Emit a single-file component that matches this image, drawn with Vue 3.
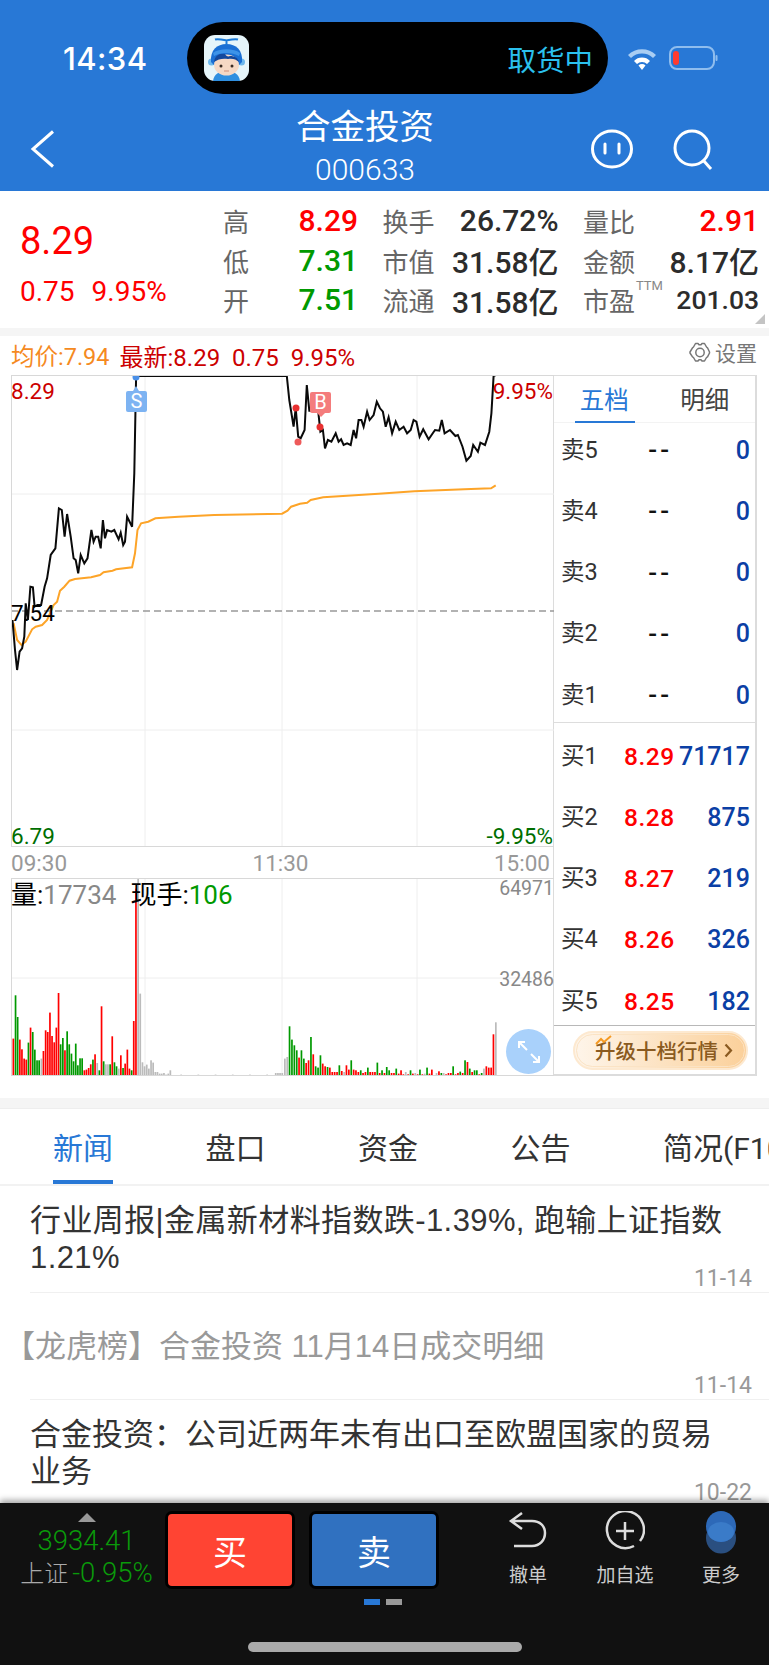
<template>
  <div class="page">
    <!-- header -->
    <header class="topbar">
      <div class="status-row">
        <span class="clock">14:34</span>
        <div class="island">
          <svg class="app-icon" width="45" height="46" viewBox="0 0 45 46">
            <rect width="45" height="46" rx="11" fill="#e6f5fa" />
            <path d="M9 46c1-7 6-10 13.500-10S35 39 36 46z" fill="#2f8fe0" />
            <circle cx="7.500" cy="27" r="3.500" fill="#6db8ee" />
            <circle cx="37.500" cy="27" r="3.500" fill="#6db8ee" />
            <path d="M7 27C6 15 13 9 22.500 9S39 15 38 27l-3 3H10z" fill="#1a6fd4" />
            <ellipse cx="22.500" cy="30" rx="12.500" ry="10.500" fill="#f6d8c4" />
            <path d="M10 27c1-7 6-9 11-8 1 2 3 3 5 2 5 0 8 2 9 6-3-3-7-4-11-3-5-1-10 0-14 3z" fill="#14489c" />
            <path d="M9 18c6-5 21-5 27 0l-1 3c-7-4-18-4-25 0z" fill="#3d93e8" />
            <circle cx="17" cy="31" r="1.500" fill="#3a2a22" />
            <circle cx="28" cy="31" r="1.500" fill="#3a2a22" />
            <path d="M20 36h5" stroke="#d89a84" stroke-width="1.200" />
            <path d="M11 4.500c3-1 7 0 11.500 1 4.500-1 8.500-2 11.500-1M22.500 5v5" fill="none" stroke="#1b7ad8" stroke-width="2" />
          </svg>
          <span class="pickup">取货中</span>
        </div>
        <div class="status-icons">
          <svg width="30" height="24" viewBox="0 0 30 24">
            <path d="M1 9a20 20 0 0 1 28 0l-3 3a16 16 0 0 0-22 0z" fill="#a9cdf3" />
            <path d="M7 15a11 11 0 0 1 16 0l-3 3a7 7 0 0 0-10 0z" fill="#fff" />
            <path d="M11.500 19.500a5 5 0 0 1 7 0L15 24z" fill="#fff" />
          </svg>
          <svg width="49" height="24" viewBox="0 0 49 24">
            <rect x="1" y="1" width="44" height="22" rx="7" fill="none" stroke="#8fbdee" stroke-width="2" />
            <rect x="4" y="5" width="6" height="14" rx="3" fill="#ff3b30" />
            <rect x="46.500" y="9" width="2" height="6" rx="1" fill="#8fbdee" />
          </svg>
        </div>
      </div>
      <div class="nav-row">
        <div class="nav-left">
          <svg width="25" height="38" viewBox="0 0 25 38">
            <path d="M23 1.500 3 19l20 17.500" fill="none" stroke="#fff" stroke-width="3" />
          </svg>
        </div>
        <div class="nav-title">
          <div class="stock-name">合金投资</div>
          <div class="stock-code">000633</div>
        </div>
        <div class="nav-right">
          <svg width="42" height="40" viewBox="0 0 42 40">
            <ellipse cx="21" cy="20" rx="19.500" ry="18" fill="none" stroke="#fff" stroke-width="3" />
            <path d="M14 15v9M28 15v9" stroke="#fff" stroke-width="3" stroke-linecap="round" />
          </svg>
          <svg width="42" height="42" viewBox="0 0 42 42">
            <circle cx="19" cy="19" r="17" fill="none" stroke="#fff" stroke-width="3" />
            <path d="m30 31 8 9" stroke="#fff" stroke-width="3" />
          </svg>
        </div>
      </div>
    </header>

    <!-- quote summary -->
    <section class="quote">
      <div class="quote-main">
        <div class="last-price">8.29</div>
        <div class="last-change"><span>0.75</span><span>9.95%</span></div>
      </div>
      <div class="quote-grid">
        <div v-for="cell in quoteCells" :key="cell.label" class="quote-cell">
          <span class="quote-label">{{ cell.label }}<sup v-if="cell.sup" class="ttm">TTM</sup></span>
          <span class="quote-value" :class="[cell.tone, { small: cell.sup }]">{{ cell.value }}</span>
        </div>
      </div>
      <i class="corner"></i>
    </section>
    <div class="strip"></div>

    <!-- legend -->
    <div class="legend">
      <span class="avg">均价:7.94</span>
      <span class="latest">最新:8.29&nbsp;&nbsp;0.75&nbsp;&nbsp;9.95%</span>
      <span class="settings">
        <svg width="22" height="21" viewBox="0 0 22 21">
          <path d="M6.500 1.500h2.500l1 1.200h2l1-1.200h2.500l2 3.500 1 .800 2 4.200v1l-2 3.800-1 .700-2 3.500H13l-1-1.200h-2l-1 1.200H6.500l-2-3.500-1-.700-2.500-3.800v-1l2.500-4.200 1-.800z" fill="none" stroke="#777" stroke-width="1.500" stroke-linejoin="round" />
          <circle cx="11" cy="10.500" r="4.200" fill="none" stroke="#777" stroke-width="1.500" />
        </svg>
        设置
      </span>
    </div>

    <!-- chart + order book -->
    <section class="market">
      <div class="charts">
        <div class="price-chart">
          <svg class="chart-svg" width="543" height="472" viewBox="0 0 543 472">
            <path d="M0 119H543M0 355H543" stroke="#eee" stroke-width="1" />
            <path d="M134 0V472M271 0V472M406 0V472" stroke="#eee" stroke-width="1" />
            <path d="M0 236H543" stroke="#999" stroke-width="1.500" stroke-dasharray="7 4" />
            <polyline :points="avgPoints" fill="none" stroke="#fda428" stroke-width="2" />
            <polyline :points="pricePoints" fill="none" stroke="#0a0a0a" stroke-width="2" />
            <circle cx="125" cy="2" r="3.500" fill="#4a90e8" />
            <path d="M125 11l3 5h-6z" fill="#7db3f2" />
            <rect x="115" y="16" width="21" height="21" rx="2" fill="#7db3f2" />
            <text x="125.500" y="33" class="mark-text">S</text>
            <path d="M306 38h8l-4 4z" fill="#f47c7c" />
            <rect x="299" y="17" width="21" height="21" rx="2" fill="#f47c7c" />
            <text x="309.500" y="34" class="mark-text">B</text>
            <circle cx="285" cy="33" r="3.500" fill="#e83030" />
            <circle cx="287" cy="67" r="3.500" fill="#ee5a5a" />
            <circle cx="309" cy="52" r="3.500" fill="#e83030" />
          </svg>
          <span class="axis-tag tl red">8.29</span>
          <span class="axis-tag tr red">9.95%</span>
          <span class="axis-tag ml">7.54</span>
          <span class="axis-tag bl green">6.79</span>
          <span class="axis-tag br green">-9.95%</span>
        </div>
        <div class="time-axis">
          <span>09:30</span><span>11:30</span><span>15:00</span>
        </div>
        <div class="volume-chart">
          <svg class="chart-svg" width="543" height="198" viewBox="0 0 543 198">
            <path d="M0 100H543" stroke="#eee" stroke-width="1" />
            <path d="M134 0V198M271 0V198M406 0V198" stroke="#eee" stroke-width="1" />
            <rect v-for="bar in bars" :key="bar.x" :x="bar.x" :y="bar.y" width="1.700" :height="bar.h" :fill="bar.fill" />
          </svg>
          <div class="vol-text">
            <b>量:</b><span class="vol-gray">17734</span>
            <b class="vol-now">现手:</b><span class="vol-green">106</span>
          </div>
          <span class="vol-max">64971</span>
          <span class="vol-mid">32486</span>
          <span class="expand">
            <svg width="26" height="26" viewBox="0 0 26 26">
              <path d="M3 9V3h6M3 3l8 8M23 17v6h-6M23 23l-8-8" fill="none" stroke="#fff" stroke-width="2" />
            </svg>
          </span>
        </div>
      </div>

      <aside class="book">
        <div class="book-tabs">
          <span class="book-tab active">五档</span>
          <span class="book-tab">明细</span>
        </div>
        <div class="book-list sells">
          <div v-for="row in sells" :key="row.label" class="book-row">
            <span class="book-label">{{ row.label }}</span>
            <span class="book-price dash">--</span>
            <span class="book-vol">0</span>
          </div>
        </div>
        <div class="book-list buys">
          <div v-for="row in buys" :key="row.label" class="book-row">
            <span class="book-label">{{ row.label }}</span>
            <span class="book-price">{{ row.price }}</span>
            <span class="book-vol">{{ row.vol }}</span>
          </div>
        </div>
        <div class="upgrade-wrap">
          <div class="upgrade">
            <span class="upgrade-text">
              <svg class="spark" width="18" height="10" viewBox="0 0 18 10">
                <path d="M1 9l5-5 3 3 7-6" fill="none" stroke="#f59a23" stroke-width="2" />
              </svg>
              升级十档行情
            </span>
            <svg width="9" height="15" viewBox="0 0 9 15">
              <path d="M1.500 1.500 7 7.500l-5.500 6" fill="none" stroke="#8a5a20" stroke-width="2.200" />
            </svg>
          </div>
        </div>
      </aside>
    </section>

    <div class="strip lower"></div>

    <!-- news tabs -->
    <nav class="tabs">
      <span v-for="(t, i) in tabs" :key="t" class="tab" :class="{ on: i === 0 }">{{ t }}</span>
    </nav>
    <section class="news">
      <article v-for="n in news" :key="n.title" class="news-item">
        <div class="news-title" :class="n.cls">{{ n.title }}</div>
        <span class="news-date">{{ n.date }}</span>
      </article>
    </section>

    <!-- bottom bar -->
    <footer class="bottom">
      <div class="bar-main">
        <div class="index">
          <i class="index-arrow"></i>
          <div class="index-value">3934.41</div>
          <div class="index-line"><span class="index-name">上证</span><span class="index-pct">-0.95%</span></div>
        </div>
        <button class="trade buy">买</button>
        <button class="trade sell">卖</button>
        <div class="actions">
          <div class="action">
            <svg width="40" height="38" viewBox="0 0 40 38">
              <path d="M14 2 3 10l11 8M3 10h21c8 0 13 5 13 12s-5 13-13 13H6" fill="none" stroke="#ddd" stroke-width="2.500" />
            </svg>
            <span>撤单</span>
          </div>
          <div class="action">
            <svg width="40" height="40" viewBox="0 0 40 40">
              <path d="M29 35A18.500 18.500 0 1 1 35 30" fill="none" stroke="#ddd" stroke-width="2.500" />
              <path d="M20 11v18M11 20h18" stroke="#ddd" stroke-width="2.500" />
            </svg>
            <span>加自选</span>
          </div>
          <div class="action">
            <svg width="32" height="43" viewBox="0 0 32 43">
              <ellipse cx="16" cy="27" rx="15" ry="15.500" fill="#2a4f80" />
              <ellipse cx="16" cy="15.500" rx="15" ry="15.500" fill="#2d69b8" />
              <ellipse cx="16" cy="21" rx="13" ry="10" fill="#3a7bc8" />
            </svg>
            <span>更多</span>
          </div>
        </div>
      </div>
      <div class="dots"><i class="dot blue"></i><i class="dot"></i></div>
      <div class="home"></div>
    </footer>
  </div>
</template>

<script setup>
const quoteCells = [
  { label: '高', value: '8.29', tone: 'up' },
  { label: '换手', value: '26.72%' },
  { label: '量比', value: '2.91', tone: 'up' },
  { label: '低', value: '7.31', tone: 'down' },
  { label: '市值', value: '31.58亿' },
  { label: '金额', value: '8.17亿' },
  { label: '开', value: '7.51', tone: 'down' },
  { label: '流通', value: '31.58亿' },
  { label: '市盈', value: '201.03', sup: true }
]

const sells = [5, 4, 3, 2, 1].map((n) => ({ label: '卖' + n }))
const buys = [
  { label: '买1', price: '8.29', vol: '71717' },
  { label: '买2', price: '8.28', vol: '875' },
  { label: '买3', price: '8.27', vol: '219' },
  { label: '买4', price: '8.26', vol: '326' },
  { label: '买5', price: '8.25', vol: '182' }
]

const tabs = ['新闻', '盘口', '资金', '公告', '简况(F10)']
const news = [
  { title: '行业周报|金属新材料指数跌-1.39%, 跑输上证指数1.21%', date: '11-14', cls: 'wide' },
  { title: '【龙虎榜】合金投资 11月14日成交明细', date: '11-14', cls: 'read' },
  { title: '合金投资：公司近两年未有出口至欧盟国家的贸易业务', date: '10-22' }
]

// traced from the chart: x is 2.8 times and y 3 times the page pixels
const tracedPrice = `35,840 42,930 48,990 55,935 62,925 68,890 72,790 78,840 85,740 92,742 97,800 105,795 115,795 125,740
132,715 142,645 155,625 165,505 173,510 181,590 188,522 198,590 206,655 212,660 219,700 226,645 236,670 245,655 256,570
262,605 268,590 275,590 282,625 288,540 294,595 300,570 312,575 320,570 332,598 338,578 345,615 350,605 356,530 370,560
376,400 381,110 385,108 803,108 810,180 822,260 828,205 835,290 842,295 853,270 859,135 866,212 880,212 890,205 897,275
904,270 910,325 918,300 928,305 940,280 948,305 955,298 962,315 972,310 982,315 990,270 997,295 1004,240 1012,240 1018,260
1028,215 1035,240 1046,225 1055,185 1064,205 1072,215 1080,260 1088,232 1098,280 1108,245 1118,270 1130,260 1140,280
1150,270 1158,240 1166,245 1175,290 1185,268 1200,298 1218,270 1230,272 1237,240 1245,280 1260,270 1275,288 1282,285
1295,320 1306,362 1318,348 1325,315 1338,335 1345,308 1358,315 1370,275 1376,220 1382,108 1388,105`
const tracedAvg = `38,850 48,900 60,915 72,905 90,868 100,860 118,855 132,840 150,795 160,785 168,752 180,740 195,722 210,717
255,712 280,705 290,697 315,692 325,688 370,682 378,640 385,570 395,550 415,545 435,535 500,530 600,525 790,521 805,512
815,500 840,491 860,488 870,480 905,472 1060,461 1160,454 1300,448 1375,445 1388,436`

function toChart(str) {
  return str.trim().split(/\s+/).map((p) => {
    const [x, y] = p.split(',').map(Number)
    return (x / 2.8 - 11).toFixed(1) + ',' + (y / 3 - 35).toFixed(1)
  }).join(' ')
}
const pricePoints = toChart(tracedPrice)
const avgPoints = toChart(tracedAvg)

const morning = `r565 g435 g500 r568 r597 r625 r628 g577 r532 g545 g598 g630 g630 a625 r602 r540 r545 r487 r557 r576 r532 r428
g582 g563 r600 g543 g582 g610 g633 g580 g645 g624 g624 r660 r658 r653 r642 g628 r612 a638 g660 r468 g633 a642 a642 g642
r558 g636 g648 a655 r615 g653 r640 r598 r655 g660 r512 r115 a85 a430 a636 a648 a643 a655 a630 a637 a665 a665 a670 a670
a668 a673 a670 a660 a675`
const afternoon = `a625 a620 g528 g568 g585 g600 r622 g600 g625 r638 r630 g560 r612 g648 g652 g615 r640 r648 g650 r652 r665 r665 r665
g645 r662 a665 r645 r658 g630 r658 r660 r665 g660 r668 r665 g652 r665 r665 r665 g637 r668 g660 r668 g650 g660 r668 r668
g655 r670 r660 r672 a665 r672 g660 r670 a668 r672 g658 r672 a670 g652 r670 r658 r675 a668 r663 g668 a668 r672 r668 r668
g648 r672 r668 g664 r668 g630 r635 g655 r665 g660 g660 r672 g668 a655 r648 r652 r652 r552 a516`

function parseBars(str) {
  return str.trim().split(/\s+/).map((t) => ({ c: t[0], top: Number(t.slice(1)) }))
}
const colors = { r: '#ff0000', g: '#009900', a: '#bbbbbb' }
const tiny = [675, 676, 674, 677, 675, 676, 673, 676]

const amBars = parseBars(morning)
const pmBars = parseBars(afternoon)
// the tall red bar sits at x=124 of the chart, the afternoon runs from 273 to 484
const spike = amBars.findIndex((b) => b.top === 115)
const amStep = 122.6 / spike
const pmStep = 211 / (pmBars.length - 1)

function toBar(b, x) {
  const y = b.top / 3 - 27.7
  return { x: +x.toFixed(1), y: +y.toFixed(1), h: +(198 - y).toFixed(1), fill: colors[b.c] }
}
const bars = []
amBars.forEach((b, i) => bars.push(toBar(b, 1.5 + i * amStep)))
for (let i = amBars.length; 1.5 + i * amStep < 272; i++) {
  const near = 1.5 + i * amStep > 262
  bars.push(toBar({ c: 'a', top: near ? 668 : tiny[i % 8] }, 1.5 + i * amStep))
}
pmBars.forEach((b, i) => bars.push(toBar(b, 273 + i * pmStep)))
</script>

<style>
html, body { margin: 0; background: #fff; }
</style>

<style scoped>
.page {
  width: 769px;
  height: 1665px;
  overflow: hidden;
  display: flex;
  flex-direction: column;
  background: #fff;
  font-family: Roboto, "Noto Sans CJK SC", sans-serif;
  color: #333;
}
.topbar { height: 191px; flex: none; background: #2878d6; color: #fff; }
.status-row {
  height: 72px;
  padding-top: 22px;
  display: grid;
  grid-template-columns: 187px 421px 1fr;
  align-items: center;
}
.clock { padding-left: 63px; font-size: 31px; font-weight: 500; font-family: Inter, Roboto, sans-serif; letter-spacing: .4px; }
.island {
  height: 72px;
  border-radius: 36px;
  background: #000;
  display: flex;
  align-items: center;
  justify-content: space-between;
  padding: 0 15px 0 17px;
}
.pickup { color: #2bc0ee; font-size: 28.500px; }
.status-icons { display: flex; align-items: center; gap: 12px; padding-left: 19px; }
.nav-row {
  height: 97px;
  display: grid;
  grid-template-columns: 265px 200px minmax(0, 1fr);
}
.nav-left { padding: 36px 0 0 30px; }
.nav-title { text-align: center; padding-top: 11px; }
.stock-name { font-size: 34.500px; line-height: 44px; }
.stock-code { font-size: 30px; line-height: 32px; margin-top: 5px; font-weight: 300; }
.nav-right { display: flex; justify-content: flex-end; gap: 40px; padding: 35px 54px 0 0; align-items: flex-start; }

.quote { height: 137px; flex: none; display: flex; position: relative; }
.quote-main { width: 225px; flex: none; padding: 27px 0 0 20px; box-sizing: border-box; color: #f00; }
.last-price { font-size: 38px; line-height: 46px; }
.last-change { font-size: 28px; line-height: 32px; margin-top: 12px; display: flex; gap: 17px; }
.quote-grid {
  display: grid;
  grid-template-columns: 133px 174px 174px;
  column-gap: 26.500px;
  grid-auto-rows: 39.500px;
  padding-top: 10px;
}
.quote-cell { display: flex; justify-content: space-between; align-items: center; }
.quote-label { font-size: 26px; color: #666; position: relative; white-space: nowrap; margin-left: -2px; }
.ttm { position: absolute; left: 53px; top: -3px; font-size: 13px; color: #888; line-height: 1.200; }
.quote-value { font-size: 30px; font-weight: 500; color: #2c2c2c; }
.quote-value.small { font-size: 26.500px; }
.quote-value.up { color: #f00; }
.quote-value.down { color: #009900; }
.corner {
  position: absolute;
  right: 4px;
  bottom: 4px;
  width: 0;
  height: 0;
  border-left: 10px solid transparent;
  border-bottom: 10px solid #c4c4c4;
}
.strip { height: 8px; flex: none; background: #f5f5f5; }
.strip.lower { height: 10px; margin-top: 22px; border-bottom: 1px solid #eee; }

.legend {
  height: 39px;
  flex: none;
  display: flex;
  align-items: center;
  padding: 0 12px 1px 11px;
  font-size: 24px;
  box-sizing: border-box;
}
.avg { color: #f58a1f; font-size: 23.500px; }
.latest { color: #cc0000; margin-left: 10px; }
.settings { margin-left: auto; display: flex; align-items: center; gap: 4px; font-size: 21px; color: #777; margin-top: -6px; }

.market { display: flex; height: 701px; flex: none; padding-left: 11px; }
.charts { width: 542px; flex: none; }
.price-chart, .volume-chart { position: relative; box-sizing: border-box; }
.price-chart { height: 472px; }
.chart-svg { display: block; }
.price-chart::before, .volume-chart::before {
  content: "";
  position: absolute;
  inset: 0 -1px 0 0;
  border: 1px solid #d8d8d8;
  border-width: 1.500px 0 1.500px 1.500px;
  pointer-events: none;
}
.mark-text { font: 20px Roboto, sans-serif; fill: #fff; text-anchor: middle; }
.axis-tag { position: absolute; font-size: 22.500px; line-height: 26px; }
.axis-tag.red { color: #cc0000; }
.axis-tag.green { color: #006e00; }
.tl { left: 0; top: 3px; }
.tr { right: 0; top: 3px; }
.ml { left: 0; top: 225px; color: #000; }
.bl { left: 0; bottom: -2px; }
.br { right: 0; bottom: -2px; }
.time-axis {
  height: 31px;
  display: flex;
  justify-content: space-between;
  align-items: center;
  padding-right: 3px;
  font-size: 22.500px;
  color: #999;
}
.volume-chart { height: 198px; }
.vol-text { position: absolute; left: 0; top: 2px; font-size: 26px; line-height: 30px; white-space: nowrap; }
.vol-text b { font-weight: 400; color: #000; }
.vol-now { margin-left: 14px; }
.vol-gray { color: #888; }
.vol-green { color: #009900; }
.vol-max, .vol-mid { position: absolute; right: -1px; font-size: 19.500px; line-height: 24px; color: #888; }
.vol-max { top: -1px; }
.vol-mid { top: 90px; }
.expand {
  position: absolute;
  left: 495px;
  top: 151px;
  width: 45px;
  height: 45px;
  border-radius: 50%;
  background: #a9d1fb;
  display: flex;
  align-items: center;
  justify-content: center;
}

.book {
  width: 204px;
  flex: none;
  box-sizing: border-box;
  border: 2px solid #dcdcdc;
  border-width: 1.500px 2px 2px 1.500px;
  display: flex;
  flex-direction: column;
}
.book-tabs { height: 47px; flex: none; display: flex; border-bottom: 1px solid #f3f3f3; box-sizing: border-box; }
.book-tab { position: relative; width: 103px; text-align: center; font-size: 24.500px; line-height: 49px; height: 46px; color: #444; }
.book-tab.active { color: #2878d6; }
.book-tab.active::after { content: ""; position: absolute; left: 21px; width: 60px; bottom: -1px; height: 2px; background: #2878d6; }
.book-list { display: flex; flex-direction: column; gap: 31.250px; box-sizing: border-box; }
.sells { height: 300px; padding-top: 12px; border-bottom: 1px solid #ddd; flex: none; }
.buys { height: 303px; padding-top: 18px; border-bottom: 1px solid #b8b8b8; flex: none; }
.book-row { height: 30px; display: grid; grid-template-columns: 63px 50px 1fr; align-items: center; padding: 0 5px 0 7px; }
.book-label { font-size: 23.500px; color: #333; margin-top: -5px; }
.book-price { font-size: 24.500px; font-weight: 500; color: #f00; text-align: right; letter-spacing: .5px; }
.book-price.dash { color: #111; padding-right: 2px; letter-spacing: 3px; font-size: 26px; }
.book-vol { font-size: 25px; font-weight: 500; color: #0b3fa5; text-align: right; }
.upgrade-wrap { flex: 1; display: flex; align-items: center; padding-left: 18.500px; }
.upgrade {
  width: 175px;
  height: 39px;
  box-sizing: border-box;
  border: 2px solid #fde9d0;
  outline: 1px solid #fbe3c4;
  outline-offset: -4px;
  border-radius: 20px;
  background: linear-gradient(90deg, #fef5ea, #fbd09a);
  display: flex;
  align-items: center;
  justify-content: center;
  gap: 6px;
  padding-left: 8px;
}
.upgrade-text {
  position: relative;
  color: #8a5a20;
  font-size: 20.500px;
  font-weight: 500;
  white-space: nowrap;
}
.spark { position: absolute; left: 0; top: 0; }

.tabs {
  height: 76px;
  flex: none;
  display: flex;
  gap: 92.500px;
  padding-left: 53px;
  border-bottom: 2px solid #f2f2f2;
  box-sizing: border-box;
  overflow: hidden;
  white-space: nowrap;
  margin-top: 1px;
}
.tab { position: relative; font-size: 30px; line-height: 78px; color: #333; height: 74px; flex: none; }
.tab.on { color: #2878d6; }
.tab.on::after { content: ""; position: absolute; left: 0; right: 0; bottom: 0; height: 4px; background: #2878d6; }

.news { flex: 1; min-height: 0; overflow: hidden; }
.news-item {
  position: relative;
  height: 107px;
  box-sizing: border-box;
  margin-left: 30px;
  padding-right: 40px;
  display: flex;
  align-items: center;
  border-bottom: 1px solid #f0f0f0;
}
.news-title { font-size: 31px; line-height: 37px; color: #333; font-family: "Liberation Sans", "Noto Sans CJK SC", sans-serif; }
.news-title.wide { letter-spacing: .4px; }
.news-title.read { color: #999; margin-left: -26px; }
.news-date { position: absolute; right: 17px; bottom: 0; font-size: 23px; line-height: 26px; color: #999; }

.bottom {
  height: 162px;
  flex: none;
  background: #111;
  box-shadow: 0 -3px 6px rgba(0, 0, 0, 0.35);
  position: relative;
  display: flex;
  flex-direction: column;
}
.bar-main { display: flex; height: 84px; box-sizing: border-box; padding-top: 8px; }
.index { width: 165px; flex: none; display: flex; flex-direction: column; align-items: center; padding-left: 8px; box-sizing: border-box; }
.index-arrow { width: 0; height: 0; margin-top: 2px; border: 9px solid transparent; border-top: 0; border-bottom: 9px solid #999; }
.index-value { color: #0a9a0a; font-size: 27.500px; font-weight: 300; line-height: 30px; margin-top: 4px; }
.index-line { font-size: 27.500px; font-weight: 300; line-height: 34px; white-space: nowrap; }
.index-name { color: #aaa; font-size: 24px; }
.index-pct { color: #0a9a0a; margin-left: 4px; }
.trade {
  width: 132px;
  height: 78px;
  margin: 0;
  padding: 0;
  border: 3px solid #000;
  border-radius: 7px;
  color: #fff;
  font: 34px "Noto Sans CJK SC", sans-serif;
}
.buy { background: #ff4433; }
.sell { background: #3071c0; margin-left: 14px; }
.actions { flex: 1; display: grid; grid-template-columns: 98px 96px 96px; padding-left: 40px; }
.action { display: flex; flex-direction: column; align-items: center; color: #ccc; font-size: 19px; height: 76px; justify-content: space-between; }
.dots { display: flex; justify-content: center; gap: 6px; margin-top: 12px; padding-right: 3px; }
.dot { width: 16px; height: 6px; background: #999; }
.dot.blue { background: #2878d6; }
.home { width: 274px; height: 10px; border-radius: 5px; background: #aaa; margin: 37px auto 0; }
</style>
